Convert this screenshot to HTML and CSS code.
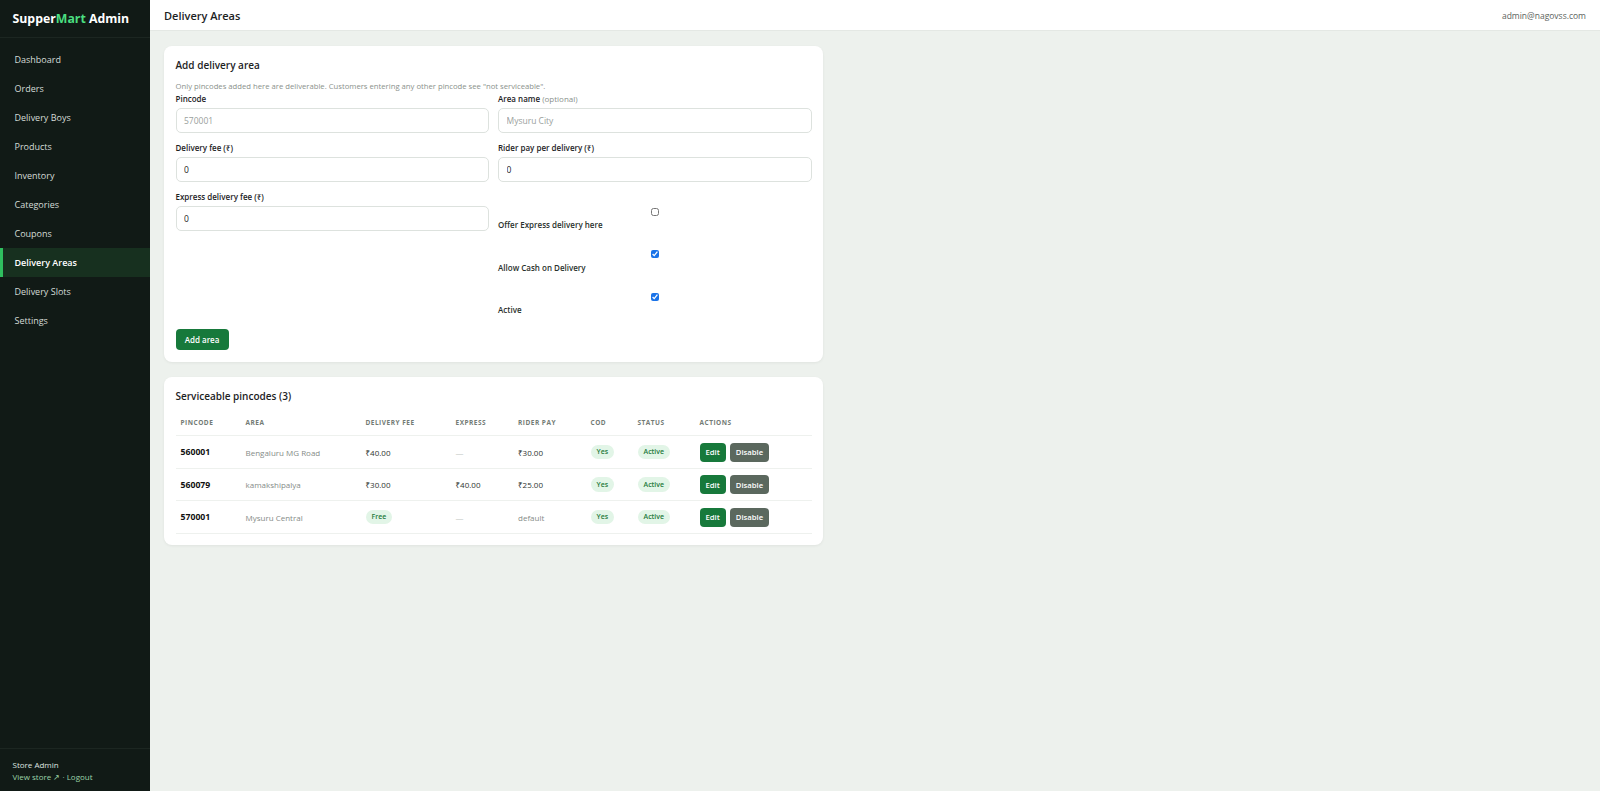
FILE: index.html
```html
<!DOCTYPE html>
<html lang="en">
<head>
<meta charset="UTF-8">
<meta name="viewport" content="width=device-width, initial-scale=1.0">
<title>Delivery Areas - SupperMart Admin</title>
<link rel="stylesheet" href="styles.css">
</head>
<body>

<aside class="sidebar">
    <div class="brand"><span>Supper<span class="brand-accent">Mart</span> Admin</span></div>
    <nav class="nav">
        <a class="nav-item" href="#">Dashboard</a>
        <a class="nav-item" href="#">Orders</a>
        <a class="nav-item" href="#">Delivery Boys</a>
        <a class="nav-item" href="#">Products</a>
        <a class="nav-item" href="#">Inventory</a>
        <a class="nav-item" href="#">Categories</a>
        <a class="nav-item" href="#">Coupons</a>
        <a class="nav-item active" href="#">Delivery Areas</a>
        <a class="nav-item" href="#">Delivery Slots</a>
        <a class="nav-item" href="#">Settings</a>
    </nav>
    <div class="sidebar-footer">
        <div class="footer-name">Store Admin</div>
        <div class="footer-links"><a href="#">View store ↗</a> · <a href="#">Logout</a></div>
    </div>
</aside>

<div class="main">
    <header class="topbar">
        <h1>Delivery Areas</h1>
        <span class="user-email">admin@nagovss.com</span>
    </header>

    <div class="content">
        <form class="card">
            <h2>Add delivery area</h2>
            <p class="hint">Only pincodes added here are deliverable. Customers entering any other pincode see "not serviceable".</p>

            <div class="form-grid">
                <div class="field">
                    <label for="pincode">Pincode</label>
                    <input type="text" id="pincode" placeholder="570001">
                </div>
                <div class="field">
                    <label for="areaName">Area name <span class="optional">(optional)</span></label>
                    <input type="text" id="areaName" placeholder="Mysuru City">
                </div>
                <div class="field">
                    <label for="deliveryFee">Delivery fee (₹)</label>
                    <input type="number" id="deliveryFee" value="0">
                </div>
                <div class="field">
                    <label for="riderPay">Rider pay per delivery (₹)</label>
                    <input type="number" id="riderPay" value="0">
                </div>
                <div class="field">
                    <label for="expressFee">Express delivery fee (₹)</label>
                    <input type="number" id="expressFee" value="0">
                </div>
                <div class="checks">
                    <label class="check"><input type="checkbox"> Offer Express delivery here</label>
                    <label class="check"><input type="checkbox" checked> Allow Cash on Delivery</label>
                    <label class="check"><input type="checkbox" checked> Active</label>
                </div>
            </div>

            <button type="button" class="btn btn-primary btn-add">Add area</button>
        </form>

        <div class="card">
            <h2>Serviceable pincodes (3)</h2>
            <table class="areas-table">
                <colgroup>
                    <col class="col-pin">
                    <col class="col-area">
                    <col class="col-fee">
                    <col class="col-express">
                    <col class="col-rider">
                    <col class="col-cod">
                    <col class="col-status">
                    <col>
                </colgroup>
                <thead>
                    <tr>
                        <th>Pincode</th>
                        <th>Area</th>
                        <th>Delivery fee</th>
                        <th>Express</th>
                        <th>Rider pay</th>
                        <th>COD</th>
                        <th>Status</th>
                        <th>Actions</th>
                    </tr>
                </thead>
                <tbody>
                    <tr>
                        <td class="pin">560001</td>
                        <td class="muted">Bengaluru MG Road</td>
                        <td>₹40.00</td>
                        <td class="dash">—</td>
                        <td>₹30.00</td>
                        <td><span class="pill">Yes</span></td>
                        <td><span class="pill">Active</span></td>
                        <td><button class="btn btn-primary btn-sm">Edit</button><button class="btn btn-muted btn-sm">Disable</button></td>
                    </tr>
                    <tr>
                        <td class="pin">560079</td>
                        <td class="muted">kamakshipalya</td>
                        <td>₹30.00</td>
                        <td>₹40.00</td>
                        <td>₹25.00</td>
                        <td><span class="pill">Yes</span></td>
                        <td><span class="pill">Active</span></td>
                        <td><button class="btn btn-primary btn-sm">Edit</button><button class="btn btn-muted btn-sm">Disable</button></td>
                    </tr>
                    <tr>
                        <td class="pin">570001</td>
                        <td class="muted">Mysuru Central</td>
                        <td><span class="pill">Free</span></td>
                        <td class="dash">—</td>
                        <td class="muted">default</td>
                        <td><span class="pill">Yes</span></td>
                        <td><span class="pill">Active</span></td>
                        <td><button class="btn btn-primary btn-sm">Edit</button><button class="btn btn-muted btn-sm">Disable</button></td>
                    </tr>
                </tbody>
            </table>
        </div>
    </div>
</div>

</body>
</html>
```

FILE: styles.css
```css
* {
    box-sizing: border-box;
}

body {
    font-family: "Open Sans", "Noto Sans", sans-serif;
    margin: 0;
    padding: 0;
    display: flex;
    height: 100vh;
    overflow: hidden;
    color: #1d231f;
    background-color: #edf1ed;
}

a {
    color: inherit;
    text-decoration: none;
}

/* sidebar */

.sidebar {
    width: 150px;
    flex-shrink: 0;
    background-color: #111a16;
    color: #d5dcd7;
    display: flex;
    flex-direction: column;
}

.brand {
    height: 38px;
    padding: 0 12.5px;
    display: flex;
    align-items: center;
    font-size: 12.3px;
    font-weight: 700;
    color: #fff;
    border-bottom: 1px solid #1c2621;
}

.brand-accent {
    color: #4ade80;
}

.nav {
    padding-top: 6.5px;
}

.nav-item {
    display: flex;
    align-items: center;
    height: 29px;
    padding-left: 11.5px;
    border-left: 3px solid transparent;
    font-size: 9px;
}

.nav-item.active {
    background-color: #17301f;
    border-left-color: #2fbf5f;
    color: #fff;
    font-weight: 600;
}

.sidebar-footer {
    margin-top: auto;
    border-top: 1px solid #1c2621;
    padding: 10px 12.5px 8px;
    font-size: 8px;
    line-height: 12px;
}

.footer-name {
    color: #dfe5e0;
}

.footer-links {
    color: #9cd4a8;
}

/* main area */

.main {
    flex: 1;
    display: flex;
    flex-direction: column;
    min-width: 0;
}

.topbar {
    height: 31px;
    background-color: #fff;
    border-bottom: 1px solid #e4e8e4;
    display: flex;
    align-items: center;
    justify-content: space-between;
    padding: 0 14px;
}

.topbar h1 {
    margin: 0;
    font-size: 11px;
    font-weight: 600;
}

.user-email {
    font-size: 8.5px;
    color: #5c635e;
}

.content {
    padding: 15px 14px;
    display: flex;
    flex-direction: column;
    gap: 15px;
}

.card {
    width: 659px;
    background-color: #fff;
    border-radius: 8px;
    padding: 12px 11.5px 11.5px;
    box-shadow: 0 1px 3px rgba(0, 0, 0, 0.06);
}

.card h2 {
    margin: 0;
    font-size: 10px;
    line-height: 15px;
    font-weight: 600;
}

.hint {
    margin: 7.5px 0 1px;
    font-size: 7.7px;
    line-height: 11px;
    color: #8a918c;
}

/* form */

.form-grid {
    display: grid;
    grid-template-columns: 1fr 1fr;
    column-gap: 9px;
    row-gap: 8.7px;
}

.field label {
    display: block;
    font-size: 8px;
    line-height: 12px;
    font-weight: 600;
    margin-bottom: 2.5px;
}

.optional {
    font-weight: 400;
    color: #8a918c;
}

.field input {
    width: 100%;
    height: 25px;
    padding: 0 7.5px;
    border: 1px solid #dde2de;
    border-radius: 5px;
    font-family: inherit;
    font-size: 8.5px;
    color: #222;
    background-color: #fff;
}

.field input::placeholder {
    color: #9aa09c;
}

.checks {
    display: flex;
    flex-direction: column;
}

.check {
    display: flex;
    flex-direction: column;
    height: 42.5px;
    padding-top: 17px;
    font-size: 8px;
    line-height: 12px;
    font-weight: 600;
    color: #2a312c;
}

.check input {
    align-self: center;
    width: 8px;
    height: 8px;
    margin: 0 0 3.5px;
    accent-color: #1a73e8;
}

/* buttons */

.btn {
    border: none;
    border-radius: 4px;
    color: #fff;
    font-family: inherit;
    font-weight: 600;
    cursor: pointer;
}

.btn-primary {
    background-color: #17793b;
}

.btn-muted {
    background-color: #5b685e;
}

.btn-add {
    margin-top: 10.5px;
    height: 21.5px;
    width: 53px;
    padding: 0;
    font-size: 8px;
}

.btn-sm {
    height: 19px;
    padding: 0 6px;
    font-size: 7.7px;
}

.btn-sm + .btn-sm {
    margin-left: 4px;
}

/* table */

.areas-table {
    width: 100%;
    margin-top: 8px;
    border-collapse: collapse;
    table-layout: fixed;
    font-size: 8px;
}

.col-pin { width: 65px; }
.col-area { width: 120px; }
.col-fee { width: 90px; }
.col-express { width: 62.5px; }
.col-rider { width: 72.5px; }
.col-cod { width: 47px; }
.col-status { width: 62px; }

.areas-table th {
    text-align: left;
    padding: 6.5px 5px 7px;
    font-size: 6.5px;
    line-height: 10px;
    letter-spacing: 0.5px;
    text-transform: uppercase;
    color: #737b75;
    font-weight: 700;
    border-bottom: 1px solid #eef1ee;
}

.areas-table td {
    height: 32.5px;
    padding: 0 5px;
    border-bottom: 1px solid #eef1ee;
    color: #2d342f;
    white-space: nowrap;
}

.areas-table td.pin {
    font-size: 8.7px;
    font-weight: 700;
    color: #111;
}

.areas-table td.muted {
    color: #858b87;
}

.areas-table td.dash {
    color: #c3c8c4;
}

.pill {
    display: inline-block;
    padding: 2.5px 6px;
    border-radius: 8px;
    background-color: #e2f5e7;
    color: #1f7a3c;
    font-size: 7px;
    line-height: 9.5px;
    font-weight: 600;
}
```
